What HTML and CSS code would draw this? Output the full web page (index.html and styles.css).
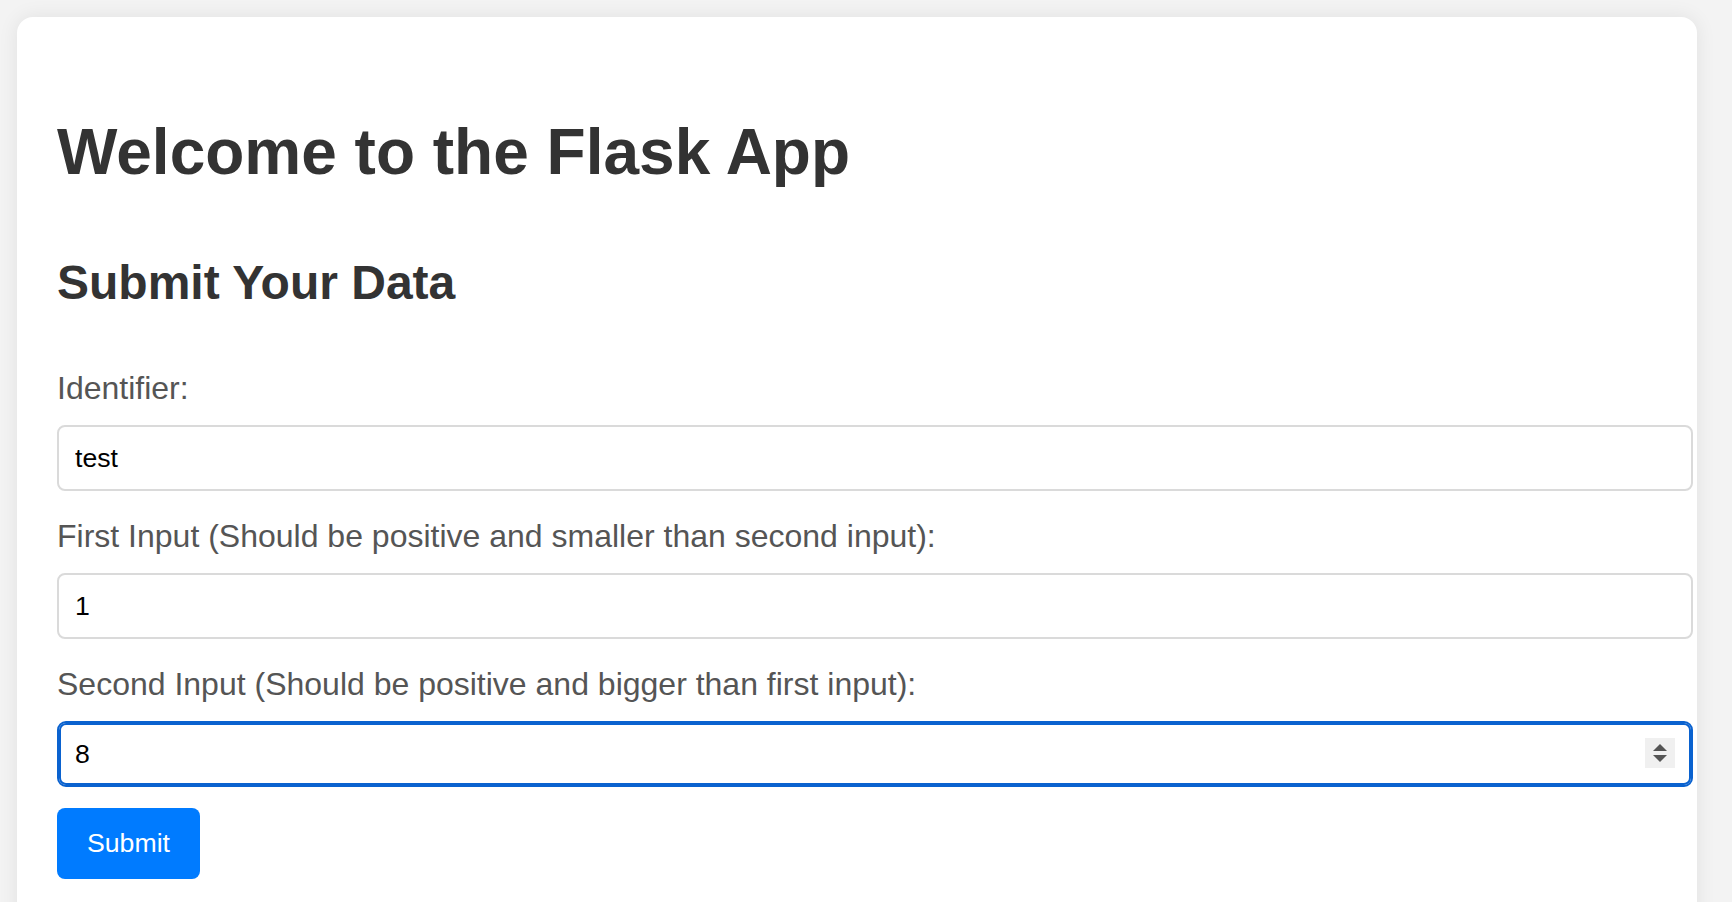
FILE: index.html
```html
<!DOCTYPE html>
<html lang="en">
<head>
<meta charset="utf-8">
<title>Flask App</title>
<link rel="stylesheet" href="styles.css">
</head>
<body>
<div class="card">
  <h1 class="title">Welcome to the Flask App</h1>
  <h2 class="subtitle">Submit Your Data</h2>
  <form class="data-form">
    <label class="field-label" for="identifier">Identifier:</label>
    <div class="field-wrap">
      <input class="field-input" id="identifier" type="text" value="test">
    </div>
    <label class="field-label" for="first">First Input (Should be positive and smaller than second input):</label>
    <div class="field-wrap">
      <input class="field-input" id="first" type="text" value="1">
    </div>
    <label class="field-label" for="second">Second Input (Should be positive and bigger than first input):</label>
    <div class="field-wrap field-wrap-last">
      <input class="field-input field-focused" id="second" type="text" value="8">
      <span class="spinner" aria-hidden="true">
        <svg width="30" height="30" viewBox="0 0 30 30">
          <polygon points="8,13 22,13 15,6" fill="#555"/>
          <polygon points="8,17 22,17 15,24" fill="#555"/>
        </svg>
      </span>
    </div>
    <button class="submit-btn" type="button">Submit</button>
  </form>
</div>
</body>
</html>
```
FILE: styles.css
```css
html, body {
  margin: 0;
  padding: 0;
}

body {
  background: #f3f3f3;
  font-family: "Liberation Sans", Arial, Helvetica, sans-serif;
  overflow: hidden;
}

.card {
  box-sizing: border-box;
  width: 1680px;
  margin: 17px 0 0 17px;
  padding: 40px 40px 40px 40px;
  background: #ffffff;
  border-radius: 16px;
  box-shadow: 0 0 20px rgba(0, 0, 0, 0.08);
  min-height: 960px;
}

.title {
  margin: 58px 0 0 0;
  font-size: 64px;
  line-height: 74px;
  font-weight: bold;
  color: #333333;
}

.subtitle {
  margin: 66px 0 60px 0;
  font-size: 48px;
  line-height: 55px;
  font-weight: bold;
  color: #333333;
}

.data-form {
  display: flex;
  flex-direction: column;
  align-items: flex-start;
}

.field-label {
  display: block;
  margin: 0 0 18px 0;
  font-size: 32px;
  line-height: 37px;
  color: #555555;
}

.field-wrap {
  position: relative;
  width: 100%;
  margin-bottom: 27px;
}

.field-wrap-last {
  margin-bottom: 21px;
}

.field-input {
  display: block;
  box-sizing: content-box;
  width: 100%;
  height: 30px;
  margin: 0;
  padding: 16px;
  border: 2px solid #dadada;
  border-radius: 8px;
  background: #ffffff;
  font-family: "Liberation Sans", Arial, Helvetica, sans-serif;
  font-size: 26.67px;
  line-height: 30px;
  color: #000000;
  outline: none;
}

.field-focused {
  border-color: #0a62cf;
  box-shadow: inset 0 0 0 2px #0a62cf;
  border-radius: 9px;
}

.spinner {
  position: absolute;
  top: 17px;
  right: -18px;
  width: 30px;
  height: 30px;
  background: #f0f0f0;
  display: flex;
}

.submit-btn {
  margin: 0;
  padding: 20px 30px;
  border: none;
  border-radius: 8px;
  background: #007bff;
  color: #ffffff;
  font-family: "Liberation Sans", Arial, Helvetica, sans-serif;
  font-size: 26.67px;
  line-height: 31px;
  cursor: pointer;
}
```
